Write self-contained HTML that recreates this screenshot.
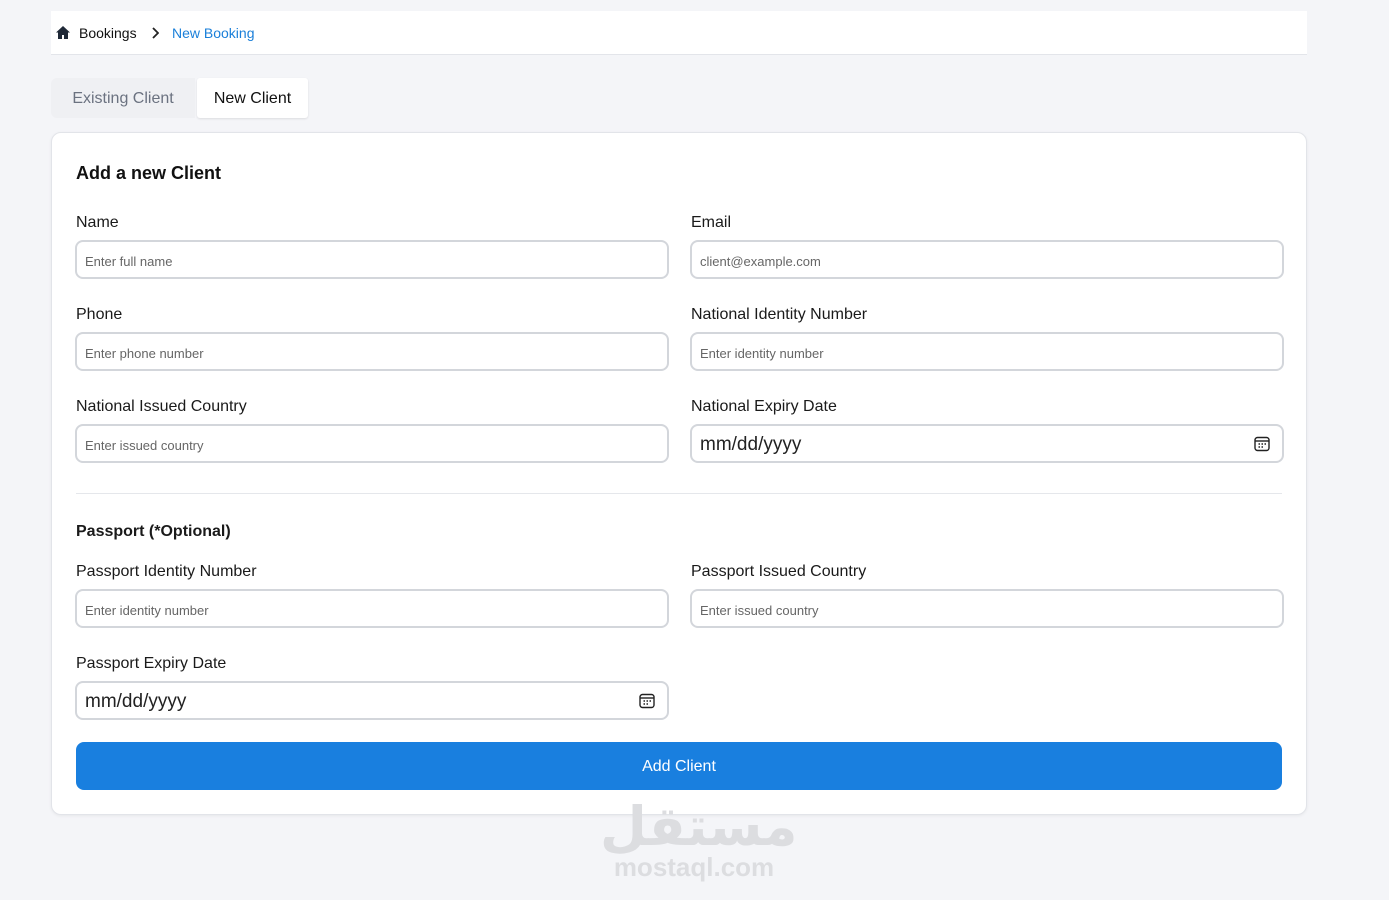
<!DOCTYPE html>
<html><head><style>
*{box-sizing:border-box;margin:0;padding:0}
body{width:1389px;height:900px;background:#f4f5f8;font-family:"Liberation Sans",sans-serif;position:relative;overflow:hidden;color:#111}
.abs{position:absolute}
.bc{left:51px;top:11px;width:1256px;height:44px;background:#fff;border-bottom:1px solid #e3e5ea}
.bc span{position:absolute;top:14px;font-size:14px}
.tab{top:78px;height:40px;font-size:16px;line-height:42px;text-align:center}
.card{left:51px;top:132px;width:1256px;height:683px;background:#fff;border:1px solid #e2e4e9;border-radius:10px;box-shadow:0 1px 3px rgba(0,0,0,.06)}
.lbl{font-size:16px;color:#1a1a1a;margin-top:2px}
.inp{height:39px;width:594px;border:2px solid #d3d6db;border-radius:8px;font-size:13px;color:#666;padding-left:8px;line-height:39px}
.date{font-size:19px;color:#222;line-height:37px}
.cal{position:absolute;right:12px;top:10px}
</style></head><body>
<div class="abs bc">
<svg class="abs" style="left:5px;top:15px" width="14" height="13" viewBox="0 0 14 13"><path d="M7 0L0 6.5h2V13h4V9h2v4h4V6.5h2z" fill="#1f2937"/></svg>
<span style="left:28px;color:#111">Bookings</span>
<svg class="abs" style="left:100px;top:16px" width="8" height="12" viewBox="0 0 8 12"><path d="M2 1l5 5-5 5" stroke="#222" stroke-width="1.8" fill="none"/></svg>
<span style="left:121px;color:#1a7fd9">New Booking</span>
</div>
<div class="abs tab" style="left:51px;width:144px;background:#eff0f3;color:#6b7280;border-radius:6px 0 0 6px">Existing Client</div>
<div class="abs tab" style="left:197px;width:111px;background:#fff;color:#111;border-radius:3px;box-shadow:0 1px 2px rgba(0,0,0,.1)">New Client</div>
<div class="abs card"></div>
<div class="abs" style="left:76px;top:163px;font-size:18px;font-weight:bold">Add a new Client</div>
<div class="abs lbl" style="left:76px;top:212px">Name</div>
<div class="abs lbl" style="left:691px;top:212px">Email</div>
<div class="abs inp" style="left:75px;top:240px">Enter full name</div>
<div class="abs inp" style="left:690px;top:240px">client@example.com</div>
<div class="abs lbl" style="left:76px;top:304px">Phone</div>
<div class="abs lbl" style="left:691px;top:304px">National Identity Number</div>
<div class="abs inp" style="left:75px;top:332px">Enter phone number</div>
<div class="abs inp" style="left:690px;top:332px">Enter identity number</div>
<div class="abs lbl" style="left:76px;top:396px">National Issued Country</div>
<div class="abs lbl" style="left:691px;top:396px">National Expiry Date</div>
<div class="abs inp" style="left:75px;top:424px">Enter issued country</div>
<div class="abs inp date" style="left:690px;top:424px">mm/dd/yyyy<svg class="cal" width="16" height="16" viewBox="0 0 16 16"><rect x="1" y="1.5" width="14" height="13" rx="2.5" fill="none" stroke="#222" stroke-width="1.4"/><path d="M1 5h14" stroke="#222" stroke-width="1.4"/><path d="M4.5 8h1.5M7.5 8h1.5M10.5 8h1.5M4.5 11h1.5M7.5 11h1.5" stroke="#222" stroke-width="1.4"/></svg></div>
<div class="abs" style="left:76px;top:493px;width:1206px;height:1px;background:#e5e7eb"></div>
<div class="abs lbl" style="left:76px;top:521px;font-weight:bold">Passport (*Optional)</div>
<div class="abs lbl" style="left:76px;top:561px">Passport Identity Number</div>
<div class="abs lbl" style="left:691px;top:561px">Passport Issued Country</div>
<div class="abs inp" style="left:75px;top:589px">Enter identity number</div>
<div class="abs inp" style="left:690px;top:589px">Enter issued country</div>
<div class="abs lbl" style="left:76px;top:653px">Passport Expiry Date</div>
<div class="abs inp date" style="left:75px;top:681px">mm/dd/yyyy<svg class="cal" width="16" height="16" viewBox="0 0 16 16"><rect x="1" y="1.5" width="14" height="13" rx="2.5" fill="none" stroke="#222" stroke-width="1.4"/><path d="M1 5h14" stroke="#222" stroke-width="1.4"/><path d="M4.5 8h1.5M7.5 8h1.5M10.5 8h1.5M4.5 11h1.5M7.5 11h1.5" stroke="#222" stroke-width="1.4"/></svg></div>
<div class="abs" style="left:76px;top:742px;width:1206px;height:48px;background:#197fdf;border-radius:8px;color:#fff;font-size:16px;text-align:center;line-height:50px">Add Client</div>
<div class="abs" style="left:600px;top:795px;width:190px;text-align:center;color:#dcdde0;font-size:54px;font-weight:bold;line-height:64px;font-family:'DejaVu Sans',sans-serif">مستقل</div>
<div class="abs" style="left:608px;top:852px;width:172px;text-align:center;color:#dcdde0;font-size:26px;font-weight:bold">mostaql.com</div>
</body></html>
